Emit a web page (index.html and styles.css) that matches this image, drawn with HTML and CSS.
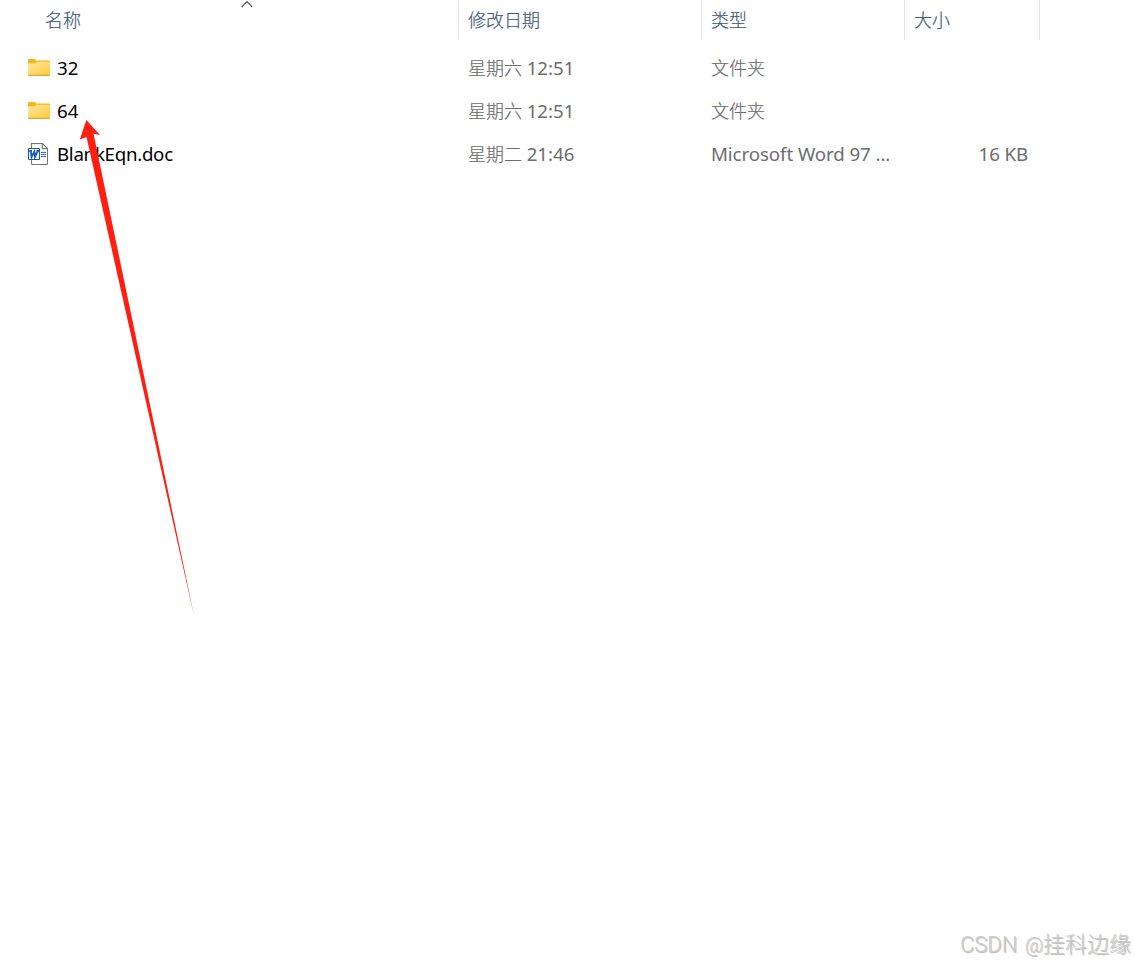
FILE: index.html
```html
<!DOCTYPE html>
<html lang="zh-CN">
<head>
<meta charset="utf-8">
<title>文件列表</title>
<link rel="stylesheet" href="styles.css">
</head>
<body>
<svg class="defs" width="0" height="0" aria-hidden="true">
  <defs>
    <linearGradient id="folderFill" x1="0" y1="0" x2="1" y2="1"><stop offset="0" stop-color="#ffe9a0"/><stop offset="1" stop-color="#ffca3c"/></linearGradient>
    <symbol id="folder" viewBox="0 0 22 18">
      <path d="M0 1Q0 0 1 0H6.5L8.5 1.5H21Q22 1.500 22 2.500V6H0Z" fill="#f8b41c"/>
      <path d="M0 4.200H7L8.500 2.700H22V16H0Z" fill="url(#folderFill)"/>
      <path d="M0 15.800H22V16Q22 17 21 17H1Q0 17 0 16Z" fill="#e6a51f"/>
    </symbol>
  </defs>
</svg>
<main class="list">
  <header class="row head">
    <div class="cell title"><span class="cjk">名称</span><svg class="sort" viewBox="0 0 12 8"><path d="M.7 7L6 1.500L11.300 7" fill="none" stroke="#555" stroke-width="1.100"/></svg></div>
    <div class="cell"><span class="cjk">修改日期</span></div>
    <div class="cell"><span class="cjk">类型</span></div>
    <div class="cell"><span class="cjk">大小</span></div>
  </header>
  <section class="files">
    <div class="row">
      <div class="cell name"><svg class="folder"><use href="#folder"/></svg><span class="latin">32</span></div>
      <div class="cell"><span class="cjk">星期六 </span><span class="latin">12:51</span></div>
      <div class="cell"><span class="cjk">文件夹</span></div>
      <div class="cell size"></div>
    </div>
    <div class="row">
      <div class="cell name"><svg class="folder"><use href="#folder"/></svg><span class="latin">64</span></div>
      <div class="cell"><span class="cjk">星期六 </span><span class="latin">12:51</span></div>
      <div class="cell"><span class="cjk">文件夹</span></div>
      <div class="cell size"></div>
    </div>
    <div class="row">
      <div class="cell name"><svg class="doc" viewBox="0 0 22 22">
          <path d="M3.500 .5H14.500L19.500 5.500V20.500Q19.500 21.500 18.500 21.500H4.500Q3.500 21.500 3.500 20.500Z" fill="#fff" stroke="#777" stroke-width="1.100"/>
          <path d="M14.300 .7V5.600H19.300" fill="none" stroke="#777" stroke-width="1.100"/>
          <path d="M13 9.500H18M13 11.500H18M13 13.500H18" stroke="#2f72d0" stroke-width="1"/>
          <path d="M.5 5.500H11.500V16.500H.5Z" fill="#fff" stroke="#185abd"/>
          <path d="M1.300 8H4M2.900 8L3.500 14L6.400 8.500L6.900 14L9.800 8M8.500 8H11" fill="none" stroke="#185abd" stroke-width="1.800"/>
        </svg><span class="latin filename">BlankEqn.doc</span></div>
      <div class="cell"><span class="cjk">星期二 </span><span class="latin">21:46</span></div>
      <div class="cell"><span class="latin type">Microsoft Word 97 ...</span></div>
      <div class="cell size"><span class="latin kb">16 KB</span></div>
    </div>
  </section>
</main>
<svg class="arrow" viewBox="0 0 1135 964" aria-hidden="true">
  <path d="M86.300 120L100 135L93.500 133.700L194.500 618L86.500 137L79.800 139.500Z" fill="#ff1e10"/>
</svg>
<footer class="mark"><span class="brand">CSDN <span class="at">@</span></span>挂科边缘</footer>
</body>
</html>
```
FILE: styles.css
```css
body {
  margin: 0;
  height: 964px;
  overflow: hidden;
  position: relative;
  background: #fff;
  color: #6d6d6d;
  font: 300 18px/26px "Noto Sans CJK SC Light", "Noto Sans CJK SC", sans-serif;
}
.defs { position: absolute; }
.row {
  display: grid;
  grid-template-columns: 459px 243px 203px 135px;
  grid-template-rows: 100%;
  height: 43px;
}
.cell {
  display: flex;
  align-items: center;
  padding-left: 9px;
  white-space: pre;
}
.cjk {
  padding-bottom: 3px;
  -webkit-text-stroke: 0.2px currentColor;
}
.head { height: 40px; color: #445a78; }
.head .cjk { padding-bottom: 2px; }
.head .cell { border-right: 1px solid #e5e5e5; }
.head .title { position: relative; padding-left: 45px; }
.sort { position: absolute; left: 241px; top: 0; width: 12px; height: 8px; }
.files { padding-top: 7px; }
.cell.name { padding-left: 28px; color: #000; }
.folder { width: 22px; height: 18px; margin: 0 7px 1px 0; }
.doc { width: 22px; height: 22px; margin: 0 7px 1px 0; }
.latin { font: 400 18.700px/26px "Noto Sans", sans-serif; padding-bottom: 1px; }
.cjk + .latin { margin-left: 0.7px; }
.filename { letter-spacing: -0.280px; }
.type { letter-spacing: -0.080px; }
.kb { letter-spacing: -0.100px; }
.cell.size { justify-content: flex-end; padding: 0 12px 0 0; }
.arrow { position: absolute; inset: 0; width: 1135px; height: 964px; }
.mark {
  position: absolute;
  right: 4px;
  bottom: 3px;
  font-size: 22px;
  line-height: 32px;
  color: #ccc;
  text-shadow: 1px 1px 1px #b4b4b4;
}
.brand { font-family: Roboto, sans-serif; }
.at { display: inline-block; margin-left: 2px; font-size: 20px; }
```
